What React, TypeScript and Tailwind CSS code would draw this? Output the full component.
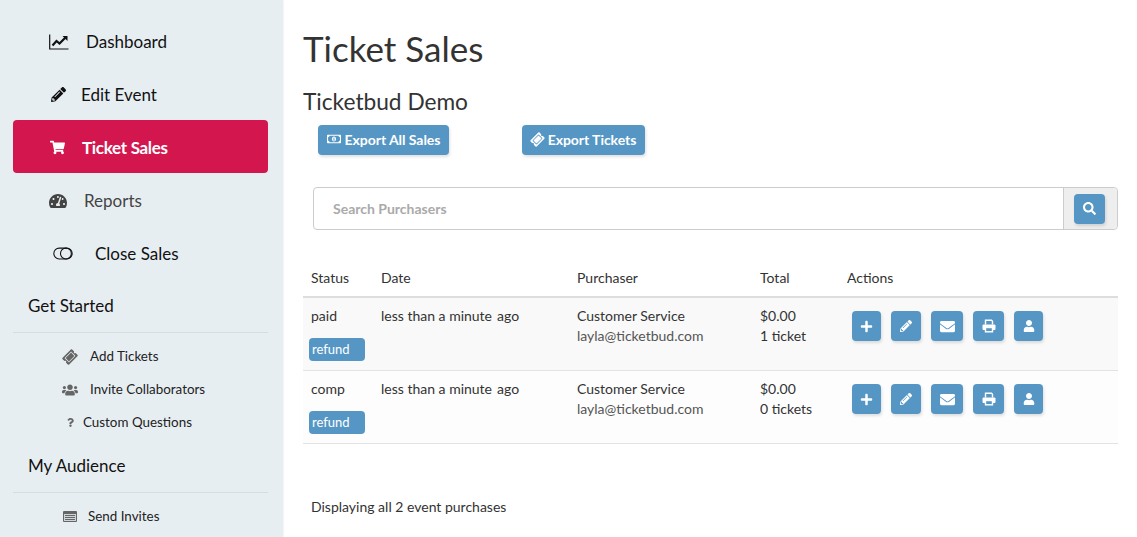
import React from "react";
import { FaPencilAlt, FaShoppingCart, FaTachometerAlt, FaTicketAlt, FaUsers, FaQuestion, FaRegMoneyBillAlt, FaSearch, FaPlus, FaEnvelope, FaUser } from "react-icons/fa";

function Toggle() {
  return (
    <svg width="24" height="15" viewBox="0 0 24 15" fill="none" stroke="#111" strokeWidth="1.3">
      <rect x="1" y="1" width="22" height="13" rx="6.5" />
      <circle cx="15.5" cy="7.5" r="6.5" />
    </svg>
  );
}

function ChartIcon() {
  return (
    <svg width="20" height="16" viewBox="0 0 20 16" fill="none" stroke="#111">
      <path d="M0.7 0.5V15H19.5" strokeWidth="1.2" />
      <path d="M3.5 11.5L7.5 7L10.5 9.5L16.5 3.5" strokeWidth="2.2" />
      <path d="M13.5 2H18.5V7Z" fill="#111" stroke="none" />
    </svg>
  );
}

function ListBox() {
  return (
    <svg width="14" height="11" viewBox="0 0 14 11">
      <rect x="0" y="0" width="14" height="11" rx="1" fill="#666" />
      <rect x="1" y="3" width="12" height="7" fill="#cfd6da" />
      <path d="M2 4.5H12M2 6.5H12M2 8.5H12" stroke="#666" strokeWidth="1" />
    </svg>
  );
}

function PrintIcon() {
  return (
    <svg width="14" height="14" viewBox="0 0 14 14" fill="none" stroke="#fff" strokeWidth="1.4">
      <path d="M3.5 5.5V1.2H9.5L10.5 2.2V5.5" />
      <path d="M3 10.5H1V6H13V10.5H11" fill="#fff" strokeWidth="1" />
      <rect x="3.5" y="8.5" width="7" height="4.3" fill="#5596c4" />
    </svg>
  );
}

function NavItem({ icon, label, active, pl, gap, color }: { icon: React.ReactNode; label: string; active?: boolean; pl: string; gap: string; color?: string }) {
  return (
    <div className={`flex h-[53px] items-center rounded text-[17px] ${active ? "bg-[#d4164f] font-bold tracking-[-0.3px] text-white" : color ?? "text-[#111]"} ${pl}`}>
      <span className="flex w-[20px] shrink-0 items-center justify-center pt-[2px]">{icon}</span>
      <span className={`pt-[2px] ${gap}`}>{label}</span>
    </div>
  );
}

function SubItem({ icon, label, gap }: { icon: React.ReactNode; label: string; gap: string }) {
  return (
    <div className="flex h-[33px] items-center pl-[48px] text-[13.4px] text-[#222]">
      <span className="flex w-[18px] shrink-0 items-center justify-center text-[#666]">{icon}</span>
      <span className={gap}>{label}</span>
    </div>
  );
}

function ActionBtn({ children, w }: { children: React.ReactNode; w: string }) {
  return (
    <span className={`flex h-[30px] items-center justify-center rounded bg-[#5596c4] text-[14px] text-white shadow-[1px_2px_3px_rgba(0,0,0,0.12)] ${w}`}>
      {children}
    </span>
  );
}

function Row({ status, tickets, bg }: { status: string; tickets: string; bg: string }) {
  return (
    <div className={`grid h-[73px] grid-cols-[78px_196px_183px_87px_1fr] border-b border-[#e3e3e3] text-[14px] text-[#333] ${bg}`}>
      <div className="flex flex-col items-start pt-[8px]">
        <span className="h-[20px] pl-[8px] leading-[20px]">{status}</span>
        <span className="ml-[6px] mt-[12px] flex h-[23px] w-[56px] items-center rounded bg-[#5596c4] pl-[3px] text-[13px] text-white">refund</span>
      </div>
      <div className="pt-[8px] leading-[20px]">
        less than a minute<span className="ml-[5px]">ago</span>
      </div>
      <div className="pt-[8px] leading-[20px]">
        <div>Customer Service</div>
        <div className="text-[#555]">layla@ticketbud.com</div>
      </div>
      <div className="pt-[8px] leading-[20px]">
        <div>$0.00</div>
        <div>{tickets}</div>
      </div>
      <div className="flex items-start gap-[10px] pl-[5px] pt-[13px]">
        <ActionBtn w="w-[29px]"><FaPlus size={13} /></ActionBtn>
        <ActionBtn w="w-[30px]"><FaPencilAlt size={12} /></ActionBtn>
        <ActionBtn w="w-[32px]"><FaEnvelope size={15} /></ActionBtn>
        <ActionBtn w="w-[31px]"><PrintIcon /></ActionBtn>
        <ActionBtn w="w-[29px]"><FaUser size={12} /></ActionBtn>
      </div>
    </div>
  );
}

export default function App() {
  return (
    <div className="flex h-[537px] w-[1137px] overflow-hidden bg-white font-['Lato','Liberation_Sans',sans-serif]">
      <aside className="h-full w-[283px] shrink-0 bg-[#e7eef2] pl-[13px] pr-[15px] pt-[14px] shadow-[0_0_2px_rgba(0,0,0,0.12)]">
        <NavItem icon={<ChartIcon />} label="Dashboard" pl="pl-[36px]" gap="ml-[17px]" />
        <NavItem icon={<FaPencilAlt size={15} />} label="Edit Event" pl="pl-[35px]" gap="ml-[13px]" />
        <NavItem icon={<FaShoppingCart size={15} />} label="Ticket Sales" active pl="pl-[34px]" gap="ml-[15px]" />
        <NavItem icon={<FaTachometerAlt size={18} />} label="Reports" pl="pl-[35px]" gap="ml-[16px]" color="text-[#444]" />
        <NavItem icon={<Toggle />} label="Close Sales" pl="pl-[40px]" gap="ml-[22px]" />
        <div className="flex h-[54px] items-center border-b border-[#d9dcdd] pl-[15px] text-[17px] text-[#111]">Get Started</div>
        <div className="pt-[7px]">
          <SubItem icon={<FaTicketAlt size={14} className="-rotate-45" />} label="Add Tickets" gap="ml-[11px]" />
          <SubItem icon={<FaUsers size={16} />} label="Invite Collaborators" gap="ml-[11px]" />
          <SubItem icon={<FaQuestion size={9} />} label="Custom Questions" gap="ml-[4px]" />
        </div>
        <div className="flex h-[54px] items-center border-b border-[#d9dcdd] pl-[15px] text-[17px] text-[#111]">My Audience</div>
        <div className="pt-[7px]">
          <SubItem icon={<ListBox />} label="Send Invites" gap="ml-[9px]" />
        </div>
      </aside>
      <main className="flex-1 pl-[20px] pr-[19px]">
        <h1 className="mt-[25px] h-[46px] text-[35px] leading-[46px] text-[#333]">Ticket Sales</h1>
        <h2 className="mt-[16px] h-[29px] text-[22.7px] leading-[29px] text-[#333]">Ticketbud Demo</h2>
        <div className="mt-[9px] flex pl-[15px]">
          <span className="flex h-[30px] w-[131px] items-center justify-center gap-[4px] rounded bg-[#5596c4] pb-[2px] text-[14px] font-bold tracking-[-0.05px] text-white shadow-[1px_2px_3px_rgba(0,0,0,0.12)]"><FaRegMoneyBillAlt size={14} />Export All Sales</span>
          <span className="ml-[73px] flex h-[30px] w-[123px] items-center justify-center gap-[4px] rounded bg-[#5596c4] pb-[2px] text-[14px] font-bold tracking-[-0.05px] text-white shadow-[1px_2px_3px_rgba(0,0,0,0.12)]"><FaTicketAlt size={13} className="-rotate-45" />Export Tickets</span>
        </div>
        <div className="ml-[10px] mt-[32px] flex h-[43px] rounded border border-[#ccc]">
          <div className="flex flex-1 items-center pl-[19px] text-[14px] font-bold text-[#aaa]">Search Purchasers</div>
          <div className="flex w-[54px] items-center rounded-r border-l border-[#ccc] bg-[#eee] pl-[10px]">
            <ActionBtn w="w-[31px]"><FaSearch size={13} /></ActionBtn>
          </div>
        </div>
        <div className="mt-[37px] grid h-[31px] grid-cols-[78px_196px_183px_87px_1fr] border-b-2 border-[#ddd] text-[14px] leading-[22px] text-[#333]">
          <div className="pl-[8px]">Status</div>
          <div>Date</div>
          <div>Purchaser</div>
          <div>Total</div>
          <div>Actions</div>
        </div>
        <Row status="paid" tickets="1 ticket" bg="bg-[#f9f9f9]" />
        <Row status="comp" tickets="0 tickets" bg="bg-[#fdfdfd]" />
        <div className="mt-[53px] pl-[8px] text-[14px] leading-[20px] text-[#333]">Displaying all 2 event purchases</div>
      </main>
    </div>
  );
}
